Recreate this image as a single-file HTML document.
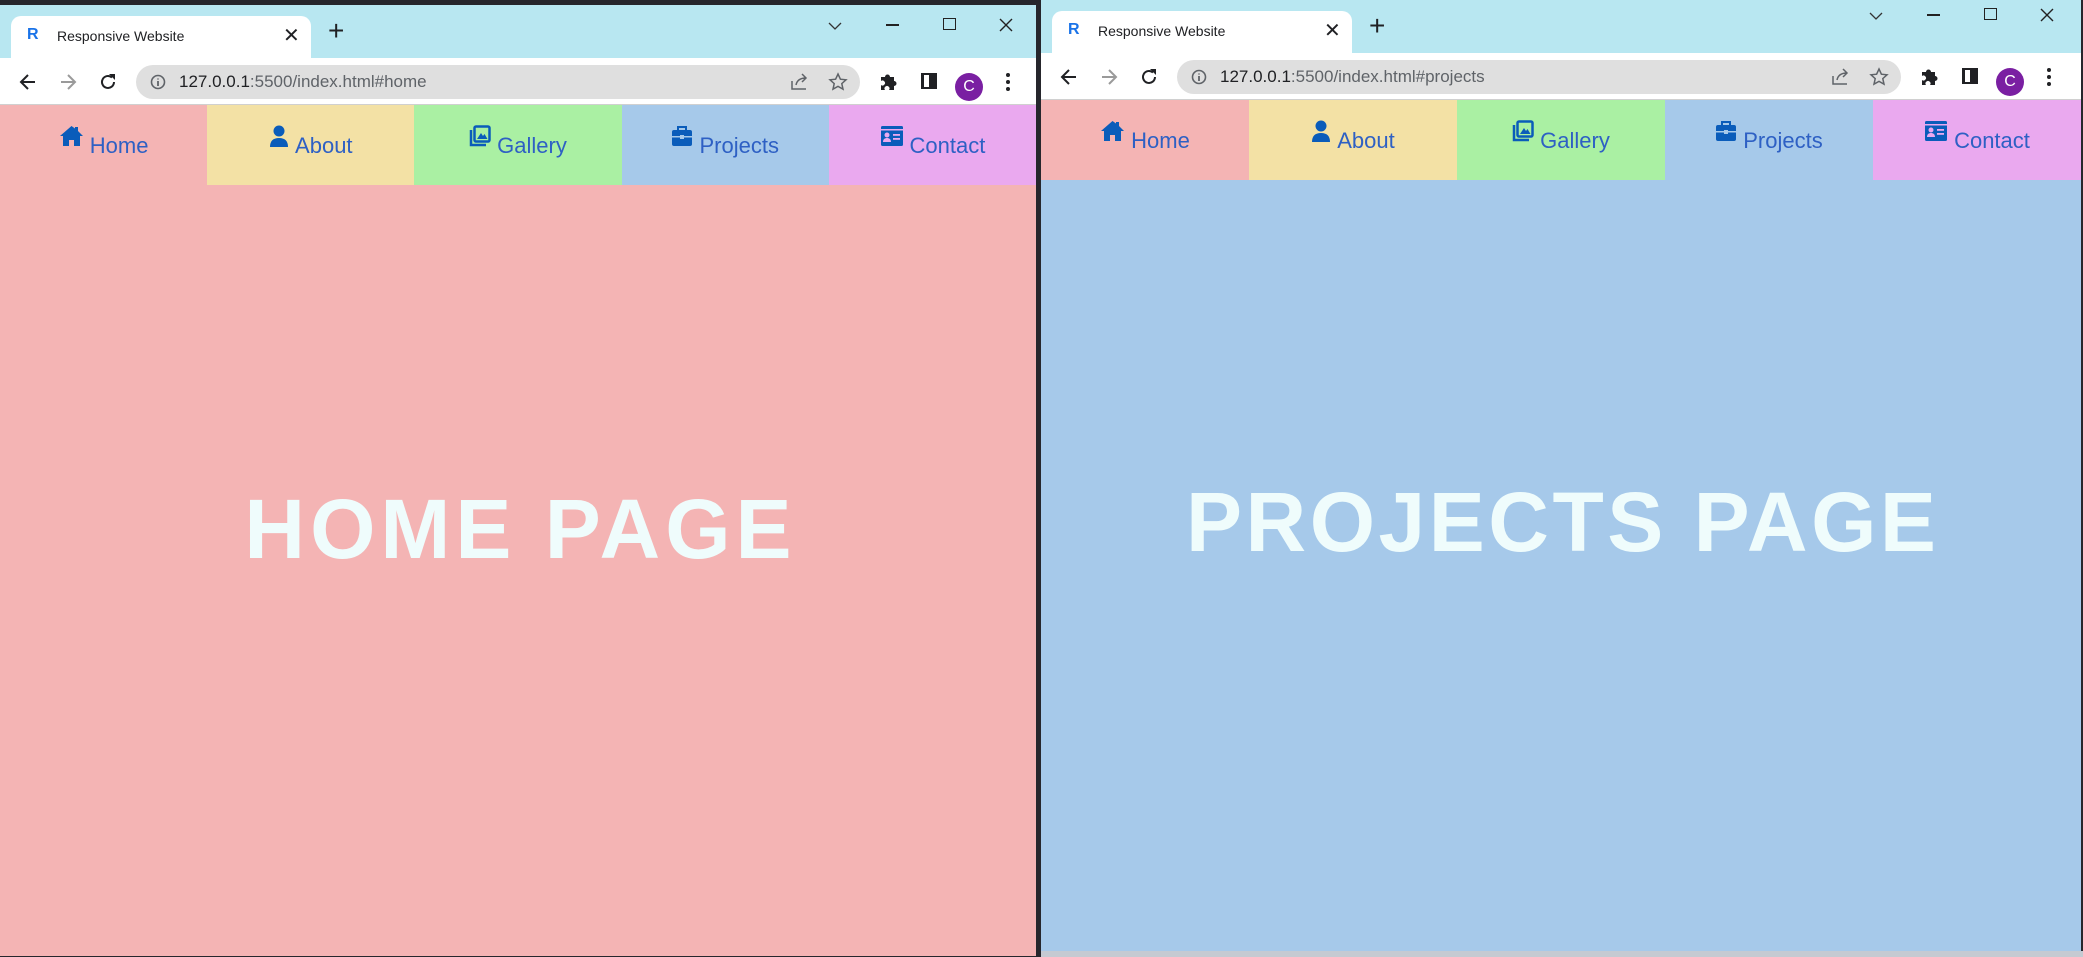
<!DOCTYPE html>
<html><head><meta charset="utf-8"><style>
*{margin:0;padding:0;box-sizing:border-box}
body{width:2083px;height:957px;background:#26262c;position:relative;overflow:hidden;font-family:"Liberation Sans",sans-serif}
.win{position:absolute;width:1036px;height:951px;overflow:hidden}
.tabbar{position:absolute;left:0;top:0;width:100%;height:53px;background:#b8e7f1}
.tab{position:absolute;left:11px;top:11px;width:300px;height:42px;background:#fff;border-radius:10px 10px 0 0}
.fav{position:absolute;left:16px;top:10px;font-weight:bold;color:#1a73e8;font-size:16px}
.title{position:absolute;left:46px;top:12px;font-size:14px;color:#202124}
.tclose{position:absolute;left:272px;top:7px;font-size:20px;color:#202124}
.plus{position:absolute;left:328px;top:14px;font-size:28px;line-height:24px;color:#202124}
.addr{position:absolute;left:0;top:53px;width:100%;height:47px;background:#fff;border-bottom:1px solid #d0d0d0}
.omni{position:absolute;left:136px;top:7px;width:724px;height:34px;background:#dfdfdf;border-radius:17px}
.url{position:absolute;left:43px;top:7px;font-size:17px;color:#5f6368}
.url b{font-weight:normal;color:#202124}
.nav{position:absolute;left:0;top:100px;width:100%;height:80px;display:flex}
.nav div{flex:1;position:relative;text-align:center;padding-top:28px;font-size:22px;color:#2e60c4;white-space:nowrap}
.nav svg{vertical-align:top;margin-top:-8px;margin-right:6px}
.content{position:absolute;left:0;top:180px;width:100%;height:771px}
.big{position:absolute;left:0;width:100%;top:302px;line-height:85px;font-size:84px;font-weight:bold;color:#effcfc;text-align:center;letter-spacing:5px;text-indent:5px}
svg.i{position:absolute}
</style></head><body>

<!-- LEFT WINDOW -->
<div class="win" style="left:0;top:5px;background:#f4b4b4">
 <div class="tabbar"></div>
 <div class="tab"><span class="fav">R</span><span class="title">Responsive Website</span><span class="tclose">✕</span></div>
 <div class="plus">+</div>
 <svg class="i" style="left:826px;top:15px" width="18" height="12"><path d="M3 3l6 6 6-6" stroke="#333" fill="none" stroke-width="1.3"/></svg>
 <div style="position:absolute;left:886px;top:19px;width:13px;height:1.5px;background:#222"></div>
 <div style="position:absolute;left:943px;top:13px;width:13px;height:12px;border:1.5px solid #222"></div>
 <svg class="i" style="left:998px;top:12px" width="16" height="16"><path d="M2 2l12 12M14 2L2 14" stroke="#222" stroke-width="1.4"/></svg>
 <div class="addr">
  <svg class="i" style="left:18px;top:14px" width="20" height="20"><path d="M17 10H4M10 3L3 10l7 7" stroke="#202124" stroke-width="2" fill="none"/></svg>
  <svg class="i" style="left:58px;top:14px" width="20" height="20"><path d="M3 10h13M10 3l7 7-7 7" stroke="#9a9a9a" stroke-width="2" fill="none"/></svg>
  <svg class="i" style="left:98px;top:14px" width="20" height="20"><path d="M16 10a6 6 0 1 1-2-4.5" stroke="#202124" stroke-width="2" fill="none"/><path d="M11 2h6v6z" fill="#202124"/></svg>
  <div class="omni">
   <svg class="i" style="left:14px;top:9px" width="16" height="16"><circle cx="8" cy="8" r="6.5" stroke="#5f6368" stroke-width="1.6" fill="none"/><path d="M8 7v5M8 4.5v1" stroke="#5f6368" stroke-width="1.8"/></svg>
   <div class="url"><b>127.0.0.1</b>:5500/index.html#home</div>
   <svg class="i" style="left:654px;top:8px" width="20" height="18"><path d="M2 8v8h14M6 12c1-5 5-7 10-7M12 1l4 4-4 4" stroke="#5f6368" stroke-width="1.5" fill="none"/></svg>
   <svg class="i" style="left:692px;top:7px" width="20" height="20"><path d="M10 2l2.4 5.2 5.6.6-4.2 3.8 1.2 5.6L10 14.4 5 17.2l1.2-5.6L2 7.8l5.6-.6z" stroke="#5f6368" stroke-width="1.5" fill="none"/></svg>
  </div>
  <svg class="i" style="left:878px;top:13px" width="20" height="20"><path d="M3 6h4a2.5 2.5 0 1 1 5 0h4v4a2.5 2.5 0 1 1 0 5v4h-5a2.5 2.5 0 1 0-4 0H3v-5a2.5 2.5 0 1 0 0-4z" fill="#202124"/></svg>
  <div style="position:absolute;left:921px;top:15px;width:16px;height:16px;border:2px solid #202124;border-left-width:3px"><div style="position:absolute;right:0;top:0;width:6px;height:12px;background:#202124"></div></div>
  <div style="position:absolute;left:955px;top:15px;width:28px;height:28px;border-radius:50%;background:#7a1fa2;color:#fff;font-size:16px;text-align:center;line-height:28px">C</div>
  <svg class="i" style="left:1005px;top:14px" width="6" height="20"><circle cx="3" cy="3" r="2" fill="#202124"/><circle cx="3" cy="10" r="2" fill="#202124"/><circle cx="3" cy="17" r="2" fill="#202124"/></svg>
 </div>
 <div class="nav">
  <div style="background:#f4b4b4"><svg width="25" height="22" viewBox="0 0 25 22"><path d="M12.5 1L1 11h3v10h6v-6h5v6h6V11h3L19 6V2h-3v1.5z" fill="#0a5cba"/></svg>Home</div>
  <div style="background:#f3e1a5"><svg width="20" height="22" viewBox="0 0 20 22"><circle cx="10" cy="6" r="5.5" fill="#0a5cba"/><path d="M1 22c0-6 3-9 9-9s9 3 9 9z" fill="#0a5cba"/></svg>About</div>
  <div style="background:#aaf0a3"><svg width="22" height="22" viewBox="0 0 22 22"><path d="M2 5v15h15" stroke="#0a5cba" stroke-width="2.5" fill="none"/><rect x="5.5" y="1.5" width="15" height="15" rx="1.5" stroke="#0a5cba" stroke-width="2.5" fill="none"/><path d="M8 14l4-6 2 3 1.5-2 3 5z" fill="#0a5cba"/></svg>Gallery</div>
  <div style="background:#a6c9ea"><svg width="22" height="22" viewBox="0 0 22 22"><path d="M7 5V2h8v3" stroke="#0a5cba" stroke-width="2" fill="none"/><rect x="1" y="5" width="20" height="16" rx="2" fill="#0a5cba"/><rect x="1" y="11" width="20" height="1.5" fill="#a6c9ea"/><rect x="9" y="10" width="4" height="4" fill="#a6c9ea"/></svg>Projects</div>
  <div style="background:#eaa9ef"><svg width="24" height="22" viewBox="0 0 24 22"><rect x="1" y="1" width="22" height="20" rx="1.5" fill="#0a5cba"/><rect x="1" y="4" width="22" height="1.5" fill="#eaa9ef"/><circle cx="7" cy="10" r="2.5" fill="#eaa9ef"/><path d="M3 17c0-3 2-4 4-4s4 1 4 4z" fill="#eaa9ef"/><rect x="13" y="9" width="7" height="1.8" fill="#eaa9ef"/><rect x="13" y="13" width="7" height="1.8" fill="#eaa9ef"/></svg>Contact</div>
 </div>
 <div class="content"><div class="big">HOME PAGE</div></div>
</div>

<!-- RIGHT WINDOW -->
<div class="win" style="left:1041px;top:0;width:1040px;background:#a6c9ea">
 <div class="tabbar"></div>
 <div class="tab"><span class="fav">R</span><span class="title">Responsive Website</span><span class="tclose">✕</span></div>
 <div class="plus">+</div>
 <svg class="i" style="left:826px;top:10px" width="18" height="12"><path d="M3 3l6 6 6-6" stroke="#333" fill="none" stroke-width="1.3"/></svg>
 <div style="position:absolute;left:886px;top:14px;width:13px;height:1.5px;background:#222"></div>
 <div style="position:absolute;left:943px;top:8px;width:13px;height:12px;border:1.5px solid #222"></div>
 <svg class="i" style="left:998px;top:7px" width="16" height="16"><path d="M2 2l12 12M14 2L2 14" stroke="#222" stroke-width="1.4"/></svg>
 <div class="addr">
  <svg class="i" style="left:18px;top:14px" width="20" height="20"><path d="M17 10H4M10 3L3 10l7 7" stroke="#202124" stroke-width="2" fill="none"/></svg>
  <svg class="i" style="left:58px;top:14px" width="20" height="20"><path d="M3 10h13M10 3l7 7-7 7" stroke="#9a9a9a" stroke-width="2" fill="none"/></svg>
  <svg class="i" style="left:98px;top:14px" width="20" height="20"><path d="M16 10a6 6 0 1 1-2-4.5" stroke="#202124" stroke-width="2" fill="none"/><path d="M11 2h6v6z" fill="#202124"/></svg>
  <div class="omni">
   <svg class="i" style="left:14px;top:9px" width="16" height="16"><circle cx="8" cy="8" r="6.5" stroke="#5f6368" stroke-width="1.6" fill="none"/><path d="M8 7v5M8 4.5v1" stroke="#5f6368" stroke-width="1.8"/></svg>
   <div class="url"><b>127.0.0.1</b>:5500/index.html#projects</div>
   <svg class="i" style="left:654px;top:8px" width="20" height="18"><path d="M2 8v8h14M6 12c1-5 5-7 10-7M12 1l4 4-4 4" stroke="#5f6368" stroke-width="1.5" fill="none"/></svg>
   <svg class="i" style="left:692px;top:7px" width="20" height="20"><path d="M10 2l2.4 5.2 5.6.6-4.2 3.8 1.2 5.6L10 14.4 5 17.2l1.2-5.6L2 7.8l5.6-.6z" stroke="#5f6368" stroke-width="1.5" fill="none"/></svg>
  </div>
  <svg class="i" style="left:878px;top:13px" width="20" height="20"><path d="M3 6h4a2.5 2.5 0 1 1 5 0h4v4a2.5 2.5 0 1 1 0 5v4h-5a2.5 2.5 0 1 0-4 0H3v-5a2.5 2.5 0 1 0 0-4z" fill="#202124"/></svg>
  <div style="position:absolute;left:921px;top:15px;width:16px;height:16px;border:2px solid #202124;border-left-width:3px"><div style="position:absolute;right:0;top:0;width:6px;height:12px;background:#202124"></div></div>
  <div style="position:absolute;left:955px;top:15px;width:28px;height:28px;border-radius:50%;background:#7a1fa2;color:#fff;font-size:16px;text-align:center;line-height:28px">C</div>
  <svg class="i" style="left:1005px;top:14px" width="6" height="20"><circle cx="3" cy="3" r="2" fill="#202124"/><circle cx="3" cy="10" r="2" fill="#202124"/><circle cx="3" cy="17" r="2" fill="#202124"/></svg>
 </div>
 <div class="nav">
  <div style="background:#f4b4b4"><svg width="25" height="22" viewBox="0 0 25 22"><path d="M12.5 1L1 11h3v10h6v-6h5v6h6V11h3L19 6V2h-3v1.5z" fill="#0a5cba"/></svg>Home</div>
  <div style="background:#f3e1a5"><svg width="20" height="22" viewBox="0 0 20 22"><circle cx="10" cy="6" r="5.5" fill="#0a5cba"/><path d="M1 22c0-6 3-9 9-9s9 3 9 9z" fill="#0a5cba"/></svg>About</div>
  <div style="background:#aaf0a3"><svg width="22" height="22" viewBox="0 0 22 22"><path d="M2 5v15h15" stroke="#0a5cba" stroke-width="2.5" fill="none"/><rect x="5.5" y="1.5" width="15" height="15" rx="1.5" stroke="#0a5cba" stroke-width="2.5" fill="none"/><path d="M8 14l4-6 2 3 1.5-2 3 5z" fill="#0a5cba"/></svg>Gallery</div>
  <div style="background:#a6c9ea"><svg width="22" height="22" viewBox="0 0 22 22"><path d="M7 5V2h8v3" stroke="#0a5cba" stroke-width="2" fill="none"/><rect x="1" y="5" width="20" height="16" rx="2" fill="#0a5cba"/><rect x="1" y="11" width="20" height="1.5" fill="#a6c9ea"/><rect x="9" y="10" width="4" height="4" fill="#a6c9ea"/></svg>Projects</div>
  <div style="background:#eaa9ef"><svg width="24" height="22" viewBox="0 0 24 22"><rect x="1" y="1" width="22" height="20" rx="1.5" fill="#0a5cba"/><rect x="1" y="4" width="22" height="1.5" fill="#eaa9ef"/><circle cx="7" cy="10" r="2.5" fill="#eaa9ef"/><path d="M3 17c0-3 2-4 4-4s4 1 4 4z" fill="#eaa9ef"/><rect x="13" y="9" width="7" height="1.8" fill="#eaa9ef"/><rect x="13" y="13" width="7" height="1.8" fill="#eaa9ef"/></svg>Contact</div>
 </div>
 <div class="content"><div class="big" style="top:300px;letter-spacing:3.5px;text-indent:3.5px">PROJECTS PAGE</div></div>
</div>
<div style="position:absolute;left:1041px;top:951px;width:1042px;height:6px;background:#c5cad2"></div>
</body></html>
